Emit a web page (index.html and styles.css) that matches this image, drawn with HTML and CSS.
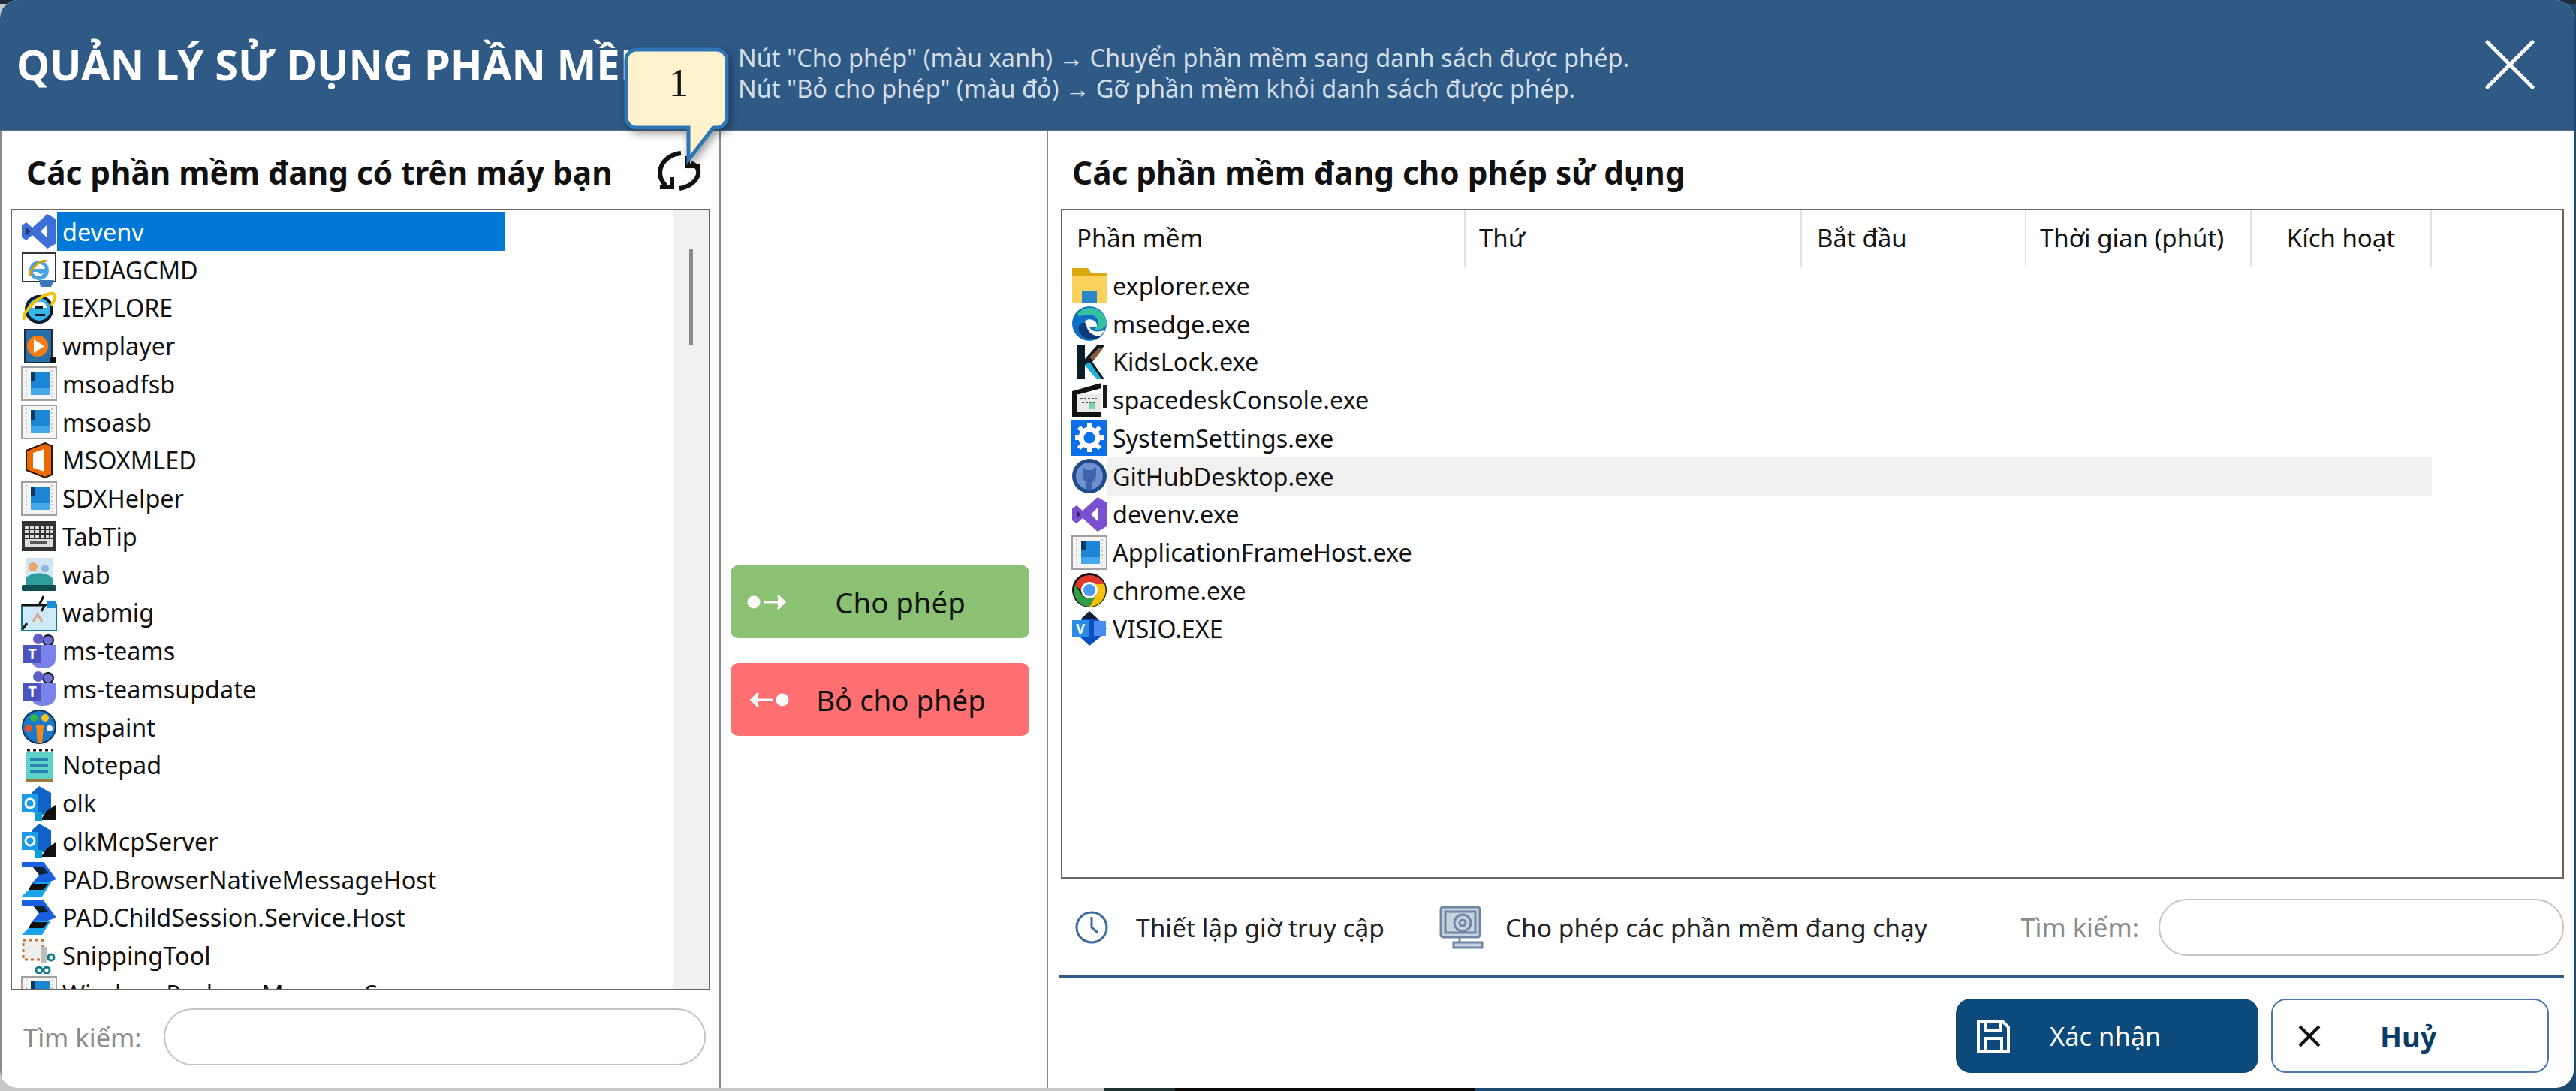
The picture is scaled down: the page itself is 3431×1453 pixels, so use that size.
FILE: index.html
```html
<!DOCTYPE html>
<html lang="vi">

<head>
    <meta charset="utf-8">
    <title>Quản lý sử dụng phần mềm</title>
    <link rel="stylesheet" href="styles.css">
</head>

<body>
    <svg class="defs" width="0" height="0">
        <symbol id="i-vs" viewBox="0 0 48 48">
            <path fill="currentColor" d="M35 1 47 8V40L35 47 15 29 7 36 1 32V16L7 12 15 19Z"/>
            <path fill="#fff" d="M35 15 26 24 35 33Z"/>
            <path fill="#111" opacity=".6" d="M7 19 13 24 7 29Z"/>
        </symbol>
        <symbol id="i-app" viewBox="0 0 48 48">
            <rect x="1" y="2" width="46" height="44" fill="#f4f4f4" stroke="#a0a0a0" stroke-width="2"/>
            <path stroke="#c4c4c4" stroke-width="2" stroke-dasharray="2 3" d="M7 6V42M41 6V42"/>
            <rect x="13" y="8" width="25" height="31" fill="#1b86d6"/>
            <rect x="13" y="8" width="6" height="13" fill="#0d3a5c"/>
            <rect x="13" y="30" width="25" height="9" fill="#46a8e8"/>
        </symbol>
        <symbol id="i-ie" viewBox="0 0 48 48">
            <circle cx="24" cy="26" r="17" fill="#35b5e8" stroke="#0b1c2c" stroke-width="4"/>
            <path fill="#fff" d="M14 24h20c0-11-18-11-20 0Z"/>
            <path fill="#0b1c2c" d="M19 22h10v3H19ZM18 32h14v3H18Z"/>
            <path fill="none" stroke="#f2c200" stroke-width="4" d="M4 40C0 28 30 2 43 5c5 2 1 11-3 16"/>
        </symbol>
        <symbol id="i-iediag" viewBox="0 0 48 48">
            <rect x="2" y="2" width="44" height="38" fill="#fff" stroke="#333" stroke-width="2"/>
            <circle cx="24" cy="25" r="13" fill="#4aa3df"/>
            <path fill="#fff" d="M16 23h16c-1-8-14-8-16 0ZM16 27h6c2 4 6 3 8 2-4 6-14 4-14-2Z"/>
            <path fill="none" stroke="#d9a400" stroke-width="3" d="M12 33C10 25 26 9 34 13"/>
            <path fill="#3a76b8" d="M24 38h20l-4 9H26Z"/>
        </symbol>
        <symbol id="i-wmp" viewBox="0 0 48 48">
            <rect x="5" y="2" width="36" height="44" fill="#2a6fa8" stroke="#1d2b3a" stroke-width="2"/>
            <circle cx="22" cy="24" r="14" fill="#f57c14"/>
            <path fill="#fff" d="M17 15 31 24 17 33Z"/>
            <rect x="38" y="38" width="8" height="8" fill="#111"/>
        </symbol>
        <symbol id="i-office" viewBox="0 0 48 48">
            <path fill="#eb6a00" stroke="#2b1500" stroke-width="2" d="M7 11 32 1 41 5V43L32 47 7 37Z"/>
            <path fill="#fff" d="M16 14 31 9V39L16 34Z"/>
        </symbol>
        <symbol id="i-keyboard" viewBox="0 0 48 48">
            <rect x="1" y="4" width="46" height="40" fill="#333"/>
            <rect x="5" y="10" width="38" height="28" fill="#ddd"/>
            <path stroke="#333" stroke-width="2" d="M5 15H43M5 21H43M5 27H43M11 10V28M18 10V28M25 10V28M32 10V28M38 10V28"/>
            <rect x="12" y="31" width="22" height="4" fill="#555"/>
        </symbol>
        <symbol id="i-wab" viewBox="0 0 48 48">
            <rect x="6" y="2" width="36" height="34" fill="#cfe7f5"/>
            <circle cx="16" cy="14" r="6" fill="#e9a66f"/>
            <circle cx="32" cy="16" r="5" fill="#8fb4d6"/>
            <path fill="#2f9c9c" d="M6 30c4-10 32-10 36 0V38H6Z"/>
            <rect x="1" y="38" width="46" height="8" rx="2" fill="#0e4f52"/>
        </symbol>
        <symbol id="i-wabmig" viewBox="0 0 48 48">
            <rect x="1" y="14" width="46" height="34" fill="#cdeaf6" stroke="#127a80" stroke-width="2"/>
            <path fill="none" stroke="#111" stroke-width="3" d="M1 14H22M30 2 24 14h8l-5 8"/>
            <path fill="#1a8fd6" d="M34 8h13v10H34Z"/>
            <path fill="none" stroke="#e2a48e" stroke-width="3" d="M16 36l6-10 6 10"/>
            <path stroke="#111" stroke-width="3" d="M2 46 8 38"/>
        </symbol>
        <symbol id="i-teams" viewBox="0 0 48 48">
            <circle cx="36" cy="10" r="7" fill="#6b6fd6" stroke="#111" stroke-width="2"/>
            <circle cx="23" cy="8" r="7" fill="#5b5fc7"/>
            <path fill="#7b83eb" d="M14 16H46V34C46 44 38 47 28 47 18 47 14 42 14 34Z"/>
            <rect x="3" y="16" width="24" height="24" fill="#4b53bc"/>
        </symbol>
        <symbol id="i-paint" viewBox="0 0 48 48">
            <circle cx="24" cy="24" r="22" fill="#1c78c9" stroke="#10304d" stroke-width="2"/>
            <circle cx="17" cy="12" r="5" fill="#35b24a"/>
            <circle cx="32" cy="12" r="5" fill="#f6c21c"/>
            <circle cx="10" cy="26" r="5" fill="#e8532b"/>
            <circle cx="38" cy="26" r="4" fill="#f2f2f2"/>
            <path fill="#f28a1c" d="M20 22h10l-2 24h-6Z"/>
        </symbol>
        <symbol id="i-notepad" viewBox="0 0 48 48">
            <rect x="6" y="6" width="36" height="41" fill="#5ed1c8"/>
            <path stroke="#1a1a1a" stroke-width="3" stroke-dasharray="4 4" d="M8 4H42"/>
            <path stroke="#2e7fb3" stroke-width="4" d="M12 16H36M12 24H36M12 32H36"/>
            <rect x="6" y="42" width="36" height="5" fill="#9a7a3b"/>
        </symbol>
        <symbol id="i-outlook" viewBox="0 0 48 48">
            <path fill="#0f62c8" d="M24 1 40 10V32L24 42 14 34V10Z"/>
            <path fill="#111" d="M26 46H46V26L34 34Z"/>
            <rect x="1" y="12" width="22" height="24" fill="#1a9be8"/>
            <circle cx="12" cy="24" r="6" fill="none" stroke="#fff" stroke-width="3"/>
            <path fill="#0d9ed6" d="M18 36H28V47H18Z"/>
        </symbol>
        <symbol id="i-pad" viewBox="0 0 48 48">
            <path fill="#1a5fe0" d="M1 1H30L47 24 30 30H14L24 18 16 8H1Z"/>
            <path fill="#123" d="M16 8H30L36 16 24 18Z"/>
            <path fill="#19a3e8" d="M1 47 20 28H40L28 47Z"/>
            <path fill="#111" d="M14 30H36L30 38H10Z"/>
        </symbol>
        <symbol id="i-snip" viewBox="0 0 48 48">
            <rect x="3" y="3" width="26" height="26" fill="#efefef" stroke="#c9702a" stroke-width="3" stroke-dasharray="4 4"/>
            <path fill="#bdbdbd" d="M26 12H34V34H26Z"/>
            <circle cx="40" cy="26" r="4" fill="none" stroke="#0e7a8a" stroke-width="3"/>
            <circle cx="34" cy="43" r="4" fill="none" stroke="#0e7a8a" stroke-width="3"/>
            <circle cx="24" cy="43" r="4" fill="none" stroke="#0e7a8a" stroke-width="3"/>
        </symbol>
        <symbol id="i-folder" viewBox="0 0 48 48">
            <path fill="#d9a90f" d="M1 1H22L26 7H47V47H1Z"/>
            <path fill="#fbd35c" d="M1 11H47V47H1Z"/>
            <path fill="#2a87c8" d="M14 32H34V47H14Z"/>
        </symbol>
        <symbol id="i-edge" viewBox="0 0 48 48">
            <circle cx="24" cy="24" r="23" fill="#0f6fc6"/>
            <path fill="#35c1a0" d="M8 12C16-2 42-1 47 22 47 30 40 33 30 32 40 26 36 12 24 12 16 12 10 16 8 12Z"/>
            <path fill="#fff" d="M18 24C18 14 36 18 34 28L24 28C26 34 32 36 44 33 40 42 30 46 22 42 14 38 17 30 18 24Z"/>
            <path fill="#0a3a78" d="M20 24C20 34 28 42 40 40 34 47 16 48 10 34 8 26 14 20 20 24Z"/>
        </symbol>
        <symbol id="i-kids" viewBox="0 0 48 48">
            <path fill="#0d1b26" d="M8 1H18V20L34 2H44L28 24 44 47H34L18 28V47H8Z"/>
            <path fill="#18b6dc" d="M18 28 34 47H40L24 24Z"/>
            <path fill="#8c5a3b" d="M24 18 36 6H42L30 22Z"/>
        </symbol>
        <symbol id="i-space" viewBox="0 0 48 48">
            <path fill="#111" d="M1 12 40 1V8L7 17V40L40 38V47H1Z"/>
            <rect x="7" y="16" width="33" height="24" fill="#e9e9e9"/>
            <path stroke="#555" stroke-width="2" stroke-dasharray="3 2" d="M12 22H34M14 27H32"/>
            <rect x="24" y="28" width="8" height="8" fill="#7fd3a8"/>
            <rect x="42" y="4" width="5" height="30" fill="#1a1a1a"/>
        </symbol>
        <symbol id="i-gear" viewBox="0 0 48 48">
            <rect width="48" height="48" fill="#0a6fe8"/>
            <circle cx="24" cy="24" r="11" fill="none" stroke="#fff" stroke-width="7"/>
            <path stroke="#fff" stroke-width="6" d="M24 5V12M24 36V43M5 24H12M36 24H43M10 10 15 15M33 33 38 38M38 10 33 15M15 33 10 38"/>
        </symbol>
        <symbol id="i-github" viewBox="0 0 48 48">
            <circle cx="24" cy="24" r="23" fill="#1e4a8a"/>
            <circle cx="24" cy="24" r="18" fill="#6f8fd0"/>
            <path fill="#3e63ad" d="M15 12 20 16H28L33 12V22C33 28 30 31 28 32V42H20V32C18 31 15 28 15 22Z"/>
        </symbol>
        <symbol id="i-chrome" viewBox="0 0 48 48">
            <circle cx="24" cy="24" r="23" fill="#111"/>
            <path fill="#e0382b" d="M5 17C12 0 36 0 44 16H24C18 16 14 20 13 25Z"/>
            <path fill="#f4c20d" d="M44 16C50 32 38 46 24 46L33 30C36 25 34 19 30 16Z"/>
            <path fill="#2f9e44" d="M24 46C8 46 0 30 5 17L15 32C18 35 22 36 33 30Z"/>
            <circle cx="24" cy="24" r="11" fill="#fff"/>
            <circle cx="24" cy="24" r="8" fill="#4a9bf0"/>
        </symbol>
        <symbol id="i-visio" viewBox="0 0 48 48">
            <path fill="#0a4fbf" d="M24 1 38 14 47 24 38 36 24 47 12 36V14Z"/>
            <path fill="#0d1f3c" d="M24 1 36 12H12Z"/>
            <rect x="1" y="13" width="23" height="22" fill="#2b8ce6"/>
            <path fill="#4a8df0" d="M30 14H46V34H30Z"/>
        </symbol>
    </svg>

    <div class="window">
        <header class="header">
            <h1 class="title">QUẢN LÝ SỬ DỤNG PHẦN MỀM</h1>
            <div class="hint">
                <div>Nút "Cho phép" (màu xanh) → Chuyển phần mềm sang danh sách được phép.</div>
                <div>Nút "Bỏ cho phép" (màu đỏ) → Gỡ phần mềm khỏi danh sách được phép.</div>
            </div>
            <svg class="close" viewBox="0 0 66 66"><path d="M3 3 63 63M63 3 3 63"/></svg>
        </header>

        <div class="content">
            <section class="left">
                <div class="heading-row">
                    <h2 class="heading">Các phần mềm đang có trên máy bạn</h2>
                    <svg class="refresh" viewBox="0 0 80 80">
                        <path d="M47 15C20 18 11 44 27 58"/>
                        <path d="M19 60H35V47"/>
                        <path d="M45 62C70 58 79 35 60 28"/>
                        <path d="M56 19V32H72"/>
                    </svg>
                </div>
                <div class="listbox">
                    <div class="list">
                        <div class="row selected"><svg class="icon vs-blue"><use href="#i-vs"/></svg><span class="name">devenv</span></div>
                        <div class="row"><svg class="icon"><use href="#i-iediag"/></svg><span class="name">IEDIAGCMD</span></div>
                        <div class="row"><svg class="icon"><use href="#i-ie"/></svg><span class="name">IEXPLORE</span></div>
                        <div class="row"><svg class="icon"><use href="#i-wmp"/></svg><span class="name">wmplayer</span></div>
                        <div class="row"><svg class="icon"><use href="#i-app"/></svg><span class="name">msoadfsb</span></div>
                        <div class="row"><svg class="icon"><use href="#i-app"/></svg><span class="name">msoasb</span></div>
                        <div class="row"><svg class="icon"><use href="#i-office"/></svg><span class="name">MSOXMLED</span></div>
                        <div class="row"><svg class="icon"><use href="#i-app"/></svg><span class="name">SDXHelper</span></div>
                        <div class="row"><svg class="icon"><use href="#i-keyboard"/></svg><span class="name">TabTip</span></div>
                        <div class="row"><svg class="icon"><use href="#i-wab"/></svg><span class="name">wab</span></div>
                        <div class="row"><svg class="icon"><use href="#i-wabmig"/></svg><span class="name">wabmig</span></div>
                        <div class="row"><svg class="icon" viewBox="0 0 48 48"><use href="#i-teams" width="48" height="48"/><text class="icon-letter" x="15" y="35" font-size="20" text-anchor="middle">T</text></svg><span class="name">ms-teams</span></div>
                        <div class="row"><svg class="icon" viewBox="0 0 48 48"><use href="#i-teams" width="48" height="48"/><text class="icon-letter" x="15" y="35" font-size="20" text-anchor="middle">T</text></svg><span class="name">ms-teamsupdate</span></div>
                        <div class="row"><svg class="icon"><use href="#i-paint"/></svg><span class="name">mspaint</span></div>
                        <div class="row"><svg class="icon"><use href="#i-notepad"/></svg><span class="name">Notepad</span></div>
                        <div class="row"><svg class="icon"><use href="#i-outlook"/></svg><span class="name">olk</span></div>
                        <div class="row"><svg class="icon"><use href="#i-outlook"/></svg><span class="name">olkMcpServer</span></div>
                        <div class="row"><svg class="icon"><use href="#i-pad"/></svg><span class="name">PAD.BrowserNativeMessageHost</span></div>
                        <div class="row"><svg class="icon"><use href="#i-pad"/></svg><span class="name">PAD.ChildSession.Service.Host</span></div>
                        <div class="row"><svg class="icon"><use href="#i-snip"/></svg><span class="name">SnippingTool</span></div>
                        <div class="row"><svg class="icon"><use href="#i-app"/></svg><span class="name">WindowsPackageManagerServer</span></div>
                    </div>
                    <div class="scrollbar"><div class="thumb"></div></div>
                </div>
                <div class="search search-left">
                    <label class="search-label">Tìm kiếm:</label>
                    <div class="search-box"></div>
                </div>
            </section>

            <section class="middle">
                <button class="move allow">
                    <svg class="move-icon" viewBox="0 0 56 28"><circle cx="9" cy="14" r="7"/><path d="M22 14H50M41 5 50 14 41 23"/></svg>
                    <span class="move-text">Cho phép</span>
                </button>
                <button class="move deny">
                    <svg class="move-icon" viewBox="0 0 56 28"><circle cx="47" cy="14" r="7"/><path d="M34 14H6M15 5 6 14 15 23"/></svg>
                    <span class="move-text">Bỏ cho phép</span>
                </button>
            </section>

            <section class="right">
                <div class="heading-row">
                    <h2 class="heading">Các phần mềm đang cho phép sử dụng</h2>
                </div>
                <div class="table">
                    <div class="thead">
                        <div class="th th-name">Phần mềm</div>
                        <div class="th th-day">Thứ</div>
                        <div class="th th-start">Bắt đầu</div>
                        <div class="th th-time">Thời gian (phút)</div>
                        <div class="th th-active">Kích hoạt</div>
                    </div>
                    <div class="row"><svg class="icon"><use href="#i-folder"/></svg><span class="name">explorer.exe</span></div>
                    <div class="row"><svg class="icon"><use href="#i-edge"/></svg><span class="name">msedge.exe</span></div>
                    <div class="row"><svg class="icon"><use href="#i-kids"/></svg><span class="name">KidsLock.exe</span></div>
                    <div class="row"><svg class="icon"><use href="#i-space"/></svg><span class="name">spacedeskConsole.exe</span></div>
                    <div class="row"><svg class="icon"><use href="#i-gear"/></svg><span class="name">SystemSettings.exe</span></div>
                    <div class="row hover"><svg class="icon"><use href="#i-github"/></svg><span class="name">GitHubDesktop.exe</span></div>
                    <div class="row"><svg class="icon vs-purple"><use href="#i-vs"/></svg><span class="name">devenv.exe</span></div>
                    <div class="row"><svg class="icon"><use href="#i-app"/></svg><span class="name">ApplicationFrameHost.exe</span></div>
                    <div class="row"><svg class="icon"><use href="#i-chrome"/></svg><span class="name">chrome.exe</span></div>
                    <div class="row"><svg class="icon" viewBox="0 0 48 48"><use href="#i-visio" width="48" height="48"/><text class="icon-letter" x="12" y="31" font-size="18" text-anchor="middle">V</text></svg><span class="name">VISIO.EXE</span></div>
                </div>
                <div class="tools">
                    <a class="tool tool-clock">
                        <svg class="clock" viewBox="0 0 44 46"><circle cx="22" cy="23" r="20"/><path d="M22 9V23L30 30"/></svg>
                        <span>Thiết lập giờ truy cập</span>
                    </a>
                    <a class="tool tool-running">
                        <svg class="monitor" viewBox="0 0 64 60">
                            <rect x="3" y="3" width="52" height="40" rx="3"/>
                            <rect x="9" y="9" width="40" height="28"/>
                            <circle cx="32" cy="24" r="11"/>
                            <circle cx="32" cy="24" r="4"/>
                            <path d="M20 50H58V57H20Z"/>
                            <path d="M28 43V50"/>
                        </svg>
                        <span>Cho phép các phần mềm đang chạy</span>
                    </a>
                    <div class="search search-right">
                        <label class="search-label">Tìm kiếm:</label>
                        <div class="search-box"></div>
                    </div>
                </div>
                <div class="divider"></div>
                <div class="actions">
                    <button class="action confirm">
                        <svg class="save" viewBox="0 0 46 46">
                            <path d="M3 3H35L43 11V43H3Z"/>
                            <path d="M12 3V15H32V3M12 43V26H34V43"/>
                        </svg>
                        <span>Xác nhận</span>
                    </button>
                    <button class="action cancel">
                        <svg class="cancel-x" viewBox="0 0 32 32"><path d="M3 3 29 29M29 3 3 29"/></svg>
                        <span>Huỷ</span>
                    </button>
                </div>
            </section>
        </div>

        <svg class="callout" viewBox="0 0 160 170">
            <path d="M22 8H128A14 14 0 0 1 142 22V98A14 14 0 0 1 128 112H124L91 155V112H22A14 14 0 0 1 8 98V22A14 14 0 0 1 22 8Z"/>
            <text x="78" y="70" text-anchor="middle">1</text>
        </svg>
    </div>
</body>

</html>
```

FILE: styles.css
```css
* {
    box-sizing: border-box;
}

html, body {
    margin: 0;
    height: 100%;
}

/* the desktop shows round the window: top edge, then the taskbar colours */
body {
    background:
        linear-gradient(#1d2a35 0 5px, transparent 5px),
        linear-gradient(to right, #c8c8c8 1470px, #1e2f30 1470px, #1e2f30 1565px, #0a0807 1565px, #0a0807 1965px, #1c4a70 1965px);
    font-family: "Noto Sans", "Open Sans", sans-serif;
    font-size: 32.4px;
    color: #111;
    overflow: hidden;
}

.defs {
    position: absolute;
}

.icon-letter {
    fill: white;
    font-family: "Noto Sans", sans-serif;
    font-weight: bold;
}

.window {
    position: relative;
    width: 3428px;
    height: 1449px;
    background-color: white;
    border-radius: 24px;
    overflow: hidden;
    display: flex;
    flex-direction: column;
}

.header {
    height: 175px;
    flex: none;
    background-color: #2f5a86;
    border-bottom: 2px solid #5f6f80;
    display: flex;
    align-items: center;
    padding: 0 52px 0 22px;
    color: white;
}

.title {
    margin: -3px 0 0;
    width: 961px;
    flex: none;
    font-size: 56px;
    font-weight: bold;
    white-space: nowrap;
}

.hint {
    flex: 1;
    font-size: 32.5px;
    line-height: 41px;
    color: #d5dde6;
    margin-top: 20px;
}

.close {
    width: 66px;
    height: 66px;
    fill: none;
    stroke: white;
    stroke-width: 5px;
    stroke-linecap: round;
    margin-top: -2px;
}

.content {
    flex: 1;
    display: flex;
    min-height: 0;
}

.left {
    width: 960px;
    flex: none;
    border-left: 3px solid #8a8a8a;
    border-right: 2px solid #8a8a8a;
    padding: 0 12px 0 11px;
    display: flex;
    flex-direction: column;
}

.heading-row {
    height: 103px;
    flex: none;
    display: flex;
    align-items: center;
    justify-content: space-between;
    padding: 6px 6px 0 21px;
}

.right .heading-row {
    padding-left: 15px;
}

.heading {
    margin: 0;
    font-size: 42.3px;
    font-weight: bold;
    white-space: nowrap;
}

.refresh {
    width: 80px;
    height: 80px;
    flex: none;
    fill: none;
    stroke: #111;
    stroke-width: 6px;
    margin-top: -2px;
}

.listbox {
    height: 1041px;
    flex: none;
    border: 2px solid #666;
    display: flex;
    overflow: hidden;
}

.list {
    flex: 1;
    min-width: 0;
    padding-top: 3px;
}

.row {
    height: 50.75px;
    display: flex;
    align-items: center;
    padding-left: 12px;
    white-space: nowrap;
}

.icon {
    width: 48px;
    height: 48px;
    flex: none;
}

.vs-blue {
    color: #3c6fd8;
}

.vs-purple {
    color: #7a4fd0;
}

.name {
    padding-left: 7px;
    line-height: 51px;
}

.list .name {
    width: 597px;
}

.selected .name {
    background-color: #0078d7;
    color: white;
}

.scrollbar {
    width: 48px;
    flex: none;
    background-color: #f0f0f0;
    padding: 52px 0 0 22px;
}

.thumb {
    width: 5px;
    height: 128px;
    background-color: #8a8a8a;
}

.search {
    display: flex;
    align-items: center;
}

.search-label {
    color: #8a8a8a;
    font-size: 34.5px;
}

.search-box {
    height: 76px;
    border: 2px solid #c4c4c4;
    border-radius: 38px;
    background-color: white;
}

.search-left {
    padding: 24px 0 0 17px;
}

.search-left .search-box {
    width: 722px;
    margin-left: 29px;
}

.middle {
    width: 436px;
    flex: none;
    border-right: 2px solid #8a8a8a;
    padding: 578px 0 0 13px;
    display: flex;
    flex-direction: column;
    gap: 33px;
}

.move {
    width: 398px;
    height: 97px;
    border: none;
    border-radius: 10px;
    display: flex;
    align-items: center;
    padding: 0 0 0 22px;
    font-family: inherit;
    font-size: 38.3px;
    color: #111;
}

.allow {
    background-color: #8bc172;
}

.deny {
    background-color: #fd6f71;
}

.move-icon {
    width: 56px;
    height: 28px;
    flex: none;
    fill: white;
    stroke: white;
    stroke-width: 3px;
}

.move-text {
    flex: 1;
    text-align: center;
    padding-right: 22px;
}

.allow .move-text {
    padding-right: 24px;
}

.right {
    flex: 1;
    min-width: 0;
    padding: 0 13px 0 17px;
    display: flex;
    flex-direction: column;
}

.table {
    height: 892px;
    flex: none;
    border: 2px solid #666;
}

.thead {
    height: 75px;
    display: flex;
    margin-bottom: 0;
}

.th {
    border-right: 2px solid #e2e2e2;
    padding-top: 14px;
    font-size: 33px;
    white-space: nowrap;
}

.th-name {
    width: 537px;
    padding-left: 19px;
}

.th-day {
    width: 448px;
    padding-left: 18px;
}

.th-start {
    width: 299px;
    padding-left: 20px;
}

.th-time {
    width: 300px;
    padding-left: 18px;
}

.th-active {
    width: 240px;
    text-align: center;
}

.table .row {
    width: 1824px;
}

.table .name {
    flex: 1;
}

.hover .name {
    background-color: #f0f0f0;
}

.tools {
    height: 129px;
    flex: none;
    display: flex;
    align-items: center;
    font-size: 33.5px;
    color: #222;
}

.tool {
    display: flex;
    align-items: center;
    white-space: nowrap;
}

.tool-clock {
    margin-left: 19px;
    gap: 37px;
}

.clock {
    width: 44px;
    height: 46px;
    fill: none;
    stroke: #3f6aa0;
    stroke-width: 3px;
}

.tool-running {
    margin-left: 72px;
    gap: 25px;
}

.monitor {
    width: 64px;
    height: 60px;
    fill: #c7d2de;
    stroke: #6e86a3;
    stroke-width: 3px;
}

.search-right {
    margin-left: auto;
}

.search-right .search-box {
    width: 540px;
    margin-left: 26px;
}

.divider {
    height: 3px;
    flex: none;
    background-color: #2f5a86;
    margin-left: -3px;
}

.actions {
    display: flex;
    justify-content: flex-end;
    gap: 17px;
    padding: 28px 20px 0 0;
}

.action {
    height: 99px;
    border-radius: 20px;
    display: flex;
    align-items: center;
    font-family: inherit;
    font-size: 34.5px;
}

.confirm {
    width: 403px;
    background-color: #0b4a7b;
    border: none;
    color: white;
    padding: 0 0 0 27px;
    gap: 52px;
}

.save {
    width: 46px;
    height: 46px;
    fill: none;
    stroke: white;
    stroke-width: 4px;
}

.cancel {
    width: 370px;
    background-color: white;
    border: 2px solid #4a74ab;
    color: #0b3c66;
    font-size: 38px;
    font-weight: bold;
    padding: 0 0 0 33px;
    gap: 78px;
}

.cancel-x {
    width: 32px;
    height: 32px;
    fill: none;
    stroke: #111;
    stroke-width: 4px;
}

/* numbered note drawn over the header */
.callout {
    position: absolute;
    left: 826px;
    top: 58px;
    width: 160px;
    height: 170px;
    filter: drop-shadow(3px 5px 6px rgba(0, 0, 0, 0.4));
}

.callout path {
    fill: #fff2cc;
    stroke: #2e75b6;
    stroke-width: 5px;
}

.callout text {
    fill: #111;
    stroke: none;
    font-family: "Liberation Serif", serif;
    font-size: 52px;
}
```
